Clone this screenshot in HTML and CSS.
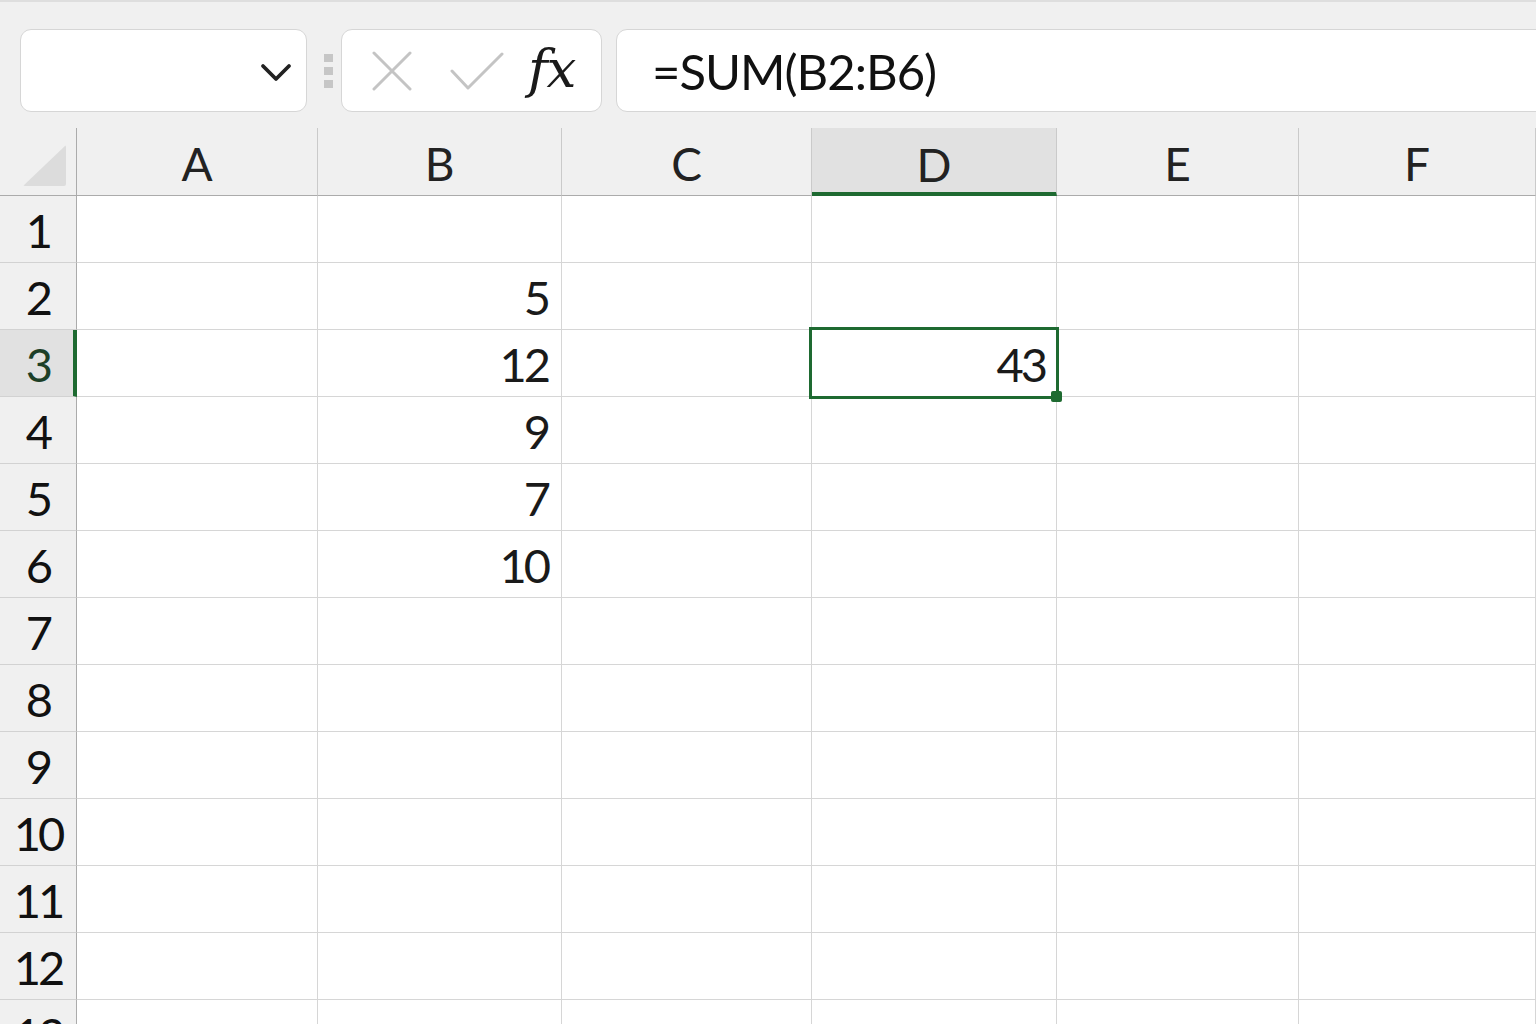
FILE: index.html
```html
<!DOCTYPE html>
<html lang="en">
<head>
    <meta charset="UTF-8">
    <meta name="viewport" content="width=device-width, initial-scale=1.0">
    <title>Sheet</title>
    <link rel="stylesheet" href="styles.css">
</head>
<body>
    <div class="toolbar">
        <div class="namebox">
            <svg width="32" height="22" viewBox="0 0 32 22"><path d="M3 4 L16 17 L29 4" fill="none" stroke="#222" stroke-width="3.8" stroke-linecap="round" stroke-linejoin="round"/></svg>
        </div>
        <div class="grip"><span></span><span></span><span></span></div>
        <div class="fnbox">
            <svg class="cancel" width="40" height="40" viewBox="0 0 40 40"><path d="M2 2 L38 38 M38 2 L2 38" stroke="#c4c4c4" stroke-width="3" stroke-linecap="round"/></svg>
            <svg class="enter" width="54" height="38" viewBox="0 0 54 38"><path d="M2 19 L18 36 L52 2" fill="none" stroke="#c4c4c4" stroke-width="3" stroke-linecap="round" stroke-linejoin="round"/></svg>
            <span class="fx">fx</span>
        </div>
        <div class="formula">=SUM(B2:B6)</div>
    </div>

    <div class="sheet">
        <div class="corner"><span class="tri"></span></div>
        <div class="col">A</div>
        <div class="col">B</div>
        <div class="col">C</div>
        <div class="col col-sel">D</div>
        <div class="col">E</div>
        <div class="col">F</div>

        <div class="row">1</div><div></div><div></div><div></div><div></div><div></div><div></div>
        <div class="row">2</div><div></div><div>5</div><div></div><div></div><div></div><div></div>
        <div class="row row-sel">3</div><div></div><div>12</div><div></div><div class="sel">43<span class="handle"></span></div><div></div><div></div>
        <div class="row">4</div><div></div><div>9</div><div></div><div></div><div></div><div></div>
        <div class="row">5</div><div></div><div>7</div><div></div><div></div><div></div><div></div>
        <div class="row">6</div><div></div><div>10</div><div></div><div></div><div></div><div></div>
        <div class="row">7</div><div></div><div></div><div></div><div></div><div></div><div></div>
        <div class="row">8</div><div></div><div></div><div></div><div></div><div></div><div></div>
        <div class="row">9</div><div></div><div></div><div></div><div></div><div></div><div></div>
        <div class="row">10</div><div></div><div></div><div></div><div></div><div></div><div></div>
        <div class="row">11</div><div></div><div></div><div></div><div></div><div></div><div></div>
        <div class="row">12</div><div></div><div></div><div></div><div></div><div></div><div></div>
        <div class="row">13</div><div></div><div></div><div></div><div></div><div></div><div></div>
    </div>
</body>
</html>
```

FILE: styles.css
```css
body {
    margin: 0;
    background-color: #f0f0f0;
    font-family: Lato, "Noto Sans", sans-serif;
    color: #1a1a1a;
    height: 100vh;
    overflow: hidden;
}
.toolbar {
    display: flex;
    align-items: center;
    box-sizing: border-box;
    height: 128px;
    padding: 27px 0 16px 20px;
    border-top: 2px solid #dedede;
}
.namebox,
.fnbox,
.formula {
    box-sizing: border-box;
    height: 83px;
    background-color: #fff;
    border: 1px solid #d6d6d6;
    border-radius: 11px;
    display: flex;
    align-items: center;
}
.namebox {
    width: 287px;
    justify-content: flex-end;
    padding: 4px 14px 0 0;
}
.grip {
    display: flex;
    flex-direction: column;
    gap: 5px;
    margin: 0 8px 0 17px;
}
.grip span {
    width: 9px;
    height: 8px;
    background-color: #c6c6c6;
}
.fnbox {
    width: 261px;
    padding-left: 30px;
}
.cancel {
    margin-right: 38px;
}
.enter {
    margin-right: 24px;
}
.fx {
    font-family: "DejaVu Serif", serif;
    font-style: italic;
    font-size: 53px;
    letter-spacing: -1px;
    color: #1a1a1a;
    margin-top: -4px;
}
.formula {
    flex: 1;
    margin-left: 14px;
    margin-right: -20px;
    padding-left: 35px;
    font-size: 49px;
    letter-spacing: -1px;
    color: #111;
}
.sheet {
    display: grid;
    grid-template-columns: 77px 241px 244px 250px 245px 242px 1fr;
    grid-template-rows: 68px;
    grid-auto-rows: 67px;
}
.sheet > div {
    box-sizing: border-box;
    background-color: #fff;
    border-right: 1px solid #d6d6d6;
    border-bottom: 1px solid #d6d6d6;
    display: flex;
    align-items: center;
    justify-content: flex-end;
    padding: 2px 13px 0 0;
    font-size: 47px;
    letter-spacing: -3px;
}
.sheet > .corner,
.sheet > .col {
    background-color: #f0f0f0;
    border-right-color: #cacaca;
    border-bottom-color: #ababab;
    justify-content: center;
    padding: 4px 0 0 0;
    font-size: 46px;
    letter-spacing: 0;
    color: #222;
}
.sheet > .corner {
    border-right-color: #ababab;
    align-items: flex-start;
    justify-content: flex-start;
    padding: 0;
}
.tri {
    width: 43px;
    height: 41px;
    margin: 17px 0 0 23px;
    background-color: #dcdcdc;
    clip-path: polygon(100% 0, 100% 100%, 0 100%);
    border-radius: 2px;
}
.sheet > .col-sel {
    background-color: #e1e1e1;
    border-bottom: 4px solid #1e6a31;
    padding-top: 8px;
}
.sheet > .row {
    background-color: #f0f0f0;
    border-right-color: #ababab;
    border-bottom-color: #d2d2d2;
    justify-content: center;
    padding: 2px 0 0 0;
    color: #111;
}
.sheet > .row-sel {
    background-color: #e1e1e1;
    border-right: 4px solid #1e6a31;
    padding-left: 3px;
    color: #1d3f27;
}
.sheet > .sel {
    position: relative;
    padding-right: 11px;
}
.sel::after {
    content: "";
    position: absolute;
    top: -3px;
    left: -3px;
    right: -3px;
    bottom: -3px;
    border: 3px solid #1e6a31;
}
.handle {
    position: absolute;
    right: -6px;
    bottom: -6px;
    width: 11px;
    height: 11px;
    border-radius: 2px;
    background-color: #1e6a31;
    z-index: 1;
}
```
